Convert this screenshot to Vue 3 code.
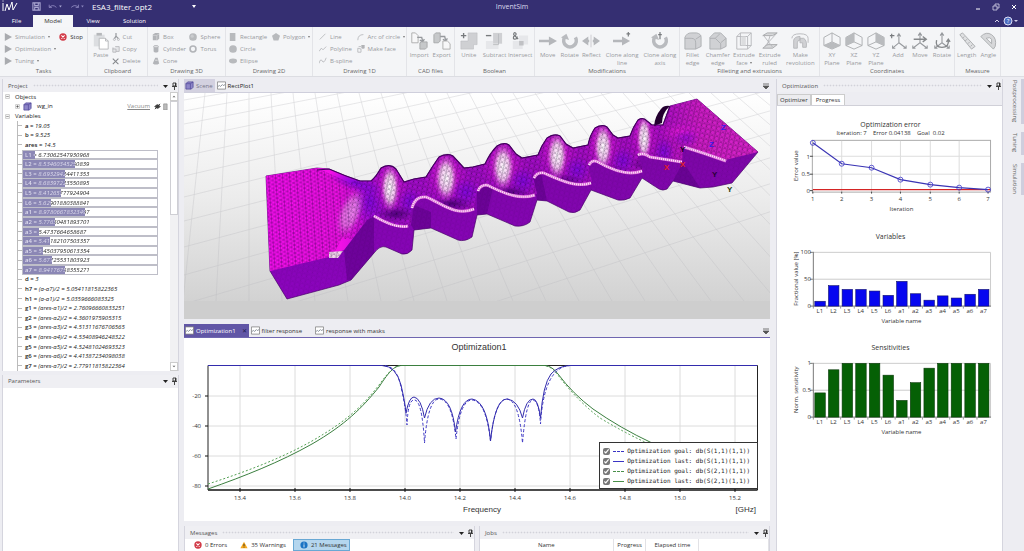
<template>
  <div class="app">
    <header class="titlebar">
      <div class="title-row">
        <svg class="logo" viewBox="0 0 16 13"><path d="M1 3v8M1 .5v1M3 11 5 4l2 6 3-8 1 8 4-7" fill="none" stroke="#fff" stroke-width="1" /></svg>
        <button class="quick" aria-label="Save"><svg viewBox="0 0 10 10"><path d="M1 1h8v8H1zM3 1v3h4V1M3 9V6h4v3" fill="none" stroke="#aaa6d2" stroke-width="1.2" /></svg></button>
        <button class="quick wide" aria-label="Undo"><svg viewBox="0 0 16 10"><path d="M1 3v3h3M1 6q4-4 8 0" fill="none" stroke="#8c86bd" /><path d="M12 4h3l-1.500 2z" fill="#aaa6d2" /></svg></button>
        <button class="quick wide" aria-label="Redo"><svg viewBox="0 0 16 10"><path d="M9 3v3H6M9 6Q5 2 1 6" fill="none" stroke="#8c86bd" /><path d="M12 4h3l-1.500 2z" fill="#8c86bd" /></svg></button>
        <span class="file-name">ESA3_filter_opt2</span>
        <svg class="name-arrow" viewBox="0 0 4 3"><path d="M0 0h4L2 3z" fill="#fff" /></svg>
        <span class="app-name">InventSim</span>
        <div class="window-buttons">
          <button aria-label="Minimize"><svg viewBox="0 0 8 8"><path d="M2 6h4" stroke="#fff" /></svg></button>
          <button aria-label="Restore"><svg viewBox="0 0 8 8"><path d="M1 3h4v4H1zM3 3V1h4v4H5" fill="none" stroke="#d6d3ea" stroke-width=".8" /></svg></button>
          <button aria-label="Close"><svg viewBox="0 0 8 8"><path d="m2 2 4 4M6 2 2 6" stroke="#fff" /></svg></button>
        </div>
      </div>
      <nav class="menu">
        <button v-for="m in menu" :key="m" :class="{ active: m === 'Model' }">{{ m }}</button>
        <svg class="help" viewBox="0 0 26 10"><path d="m3 6 2-2 2 2" fill="none" stroke="#d6d3ea" /><circle cx="16" cy="5" r="4" fill="#4c6cc0" stroke="#dcdcf4" /><text x="16" y="7" font-size="6" text-anchor="middle" fill="#fff">?</text><path d="M22 4h4l-2 2z" fill="#d6d3ea" /></svg>
      </nav>
    </header>

    <section class="ribbon">
      <div v-for="g in groups" :key="g.title" class="group">
        <div class="tools" :class="g.layout">
          <div v-for="(col, ci) in g.columns" :key="ci" class="tool-col">
            <button v-for="t in col" :key="t.label" :class="[t.big ? 'big' : 'small', { enabled: t.label === 'Stop' }]">
              <svg :viewBox="t.big ? '0 0 20 20' : '0 0 10 10'" v-html="icons[t.icon]"></svg>
              <span>{{ t.label }}<i v-if="t.menu" class="caret"></i></span>
            </button>
          </div>
        </div>
        <div class="group-title">{{ g.title }}</div>
      </div>
    </section>

    <main class="workspace">
      <div class="left">
        <section class="panel">
          <div class="panel-head"><span>Project</span><i class="grip"></i><svg viewBox="0 0 14 8" v-html="headIcons"></svg></div>
          <div class="tree-box">
            <ul class="tree">
              <li class="node"><svg viewBox="0 0 8 8" v-html="icons.minus"></svg><span>Objects</span></li>
              <li class="node object">
                <svg viewBox="0 0 8 8" v-html="icons.plus"></svg>
                <svg class="cube" viewBox="0 0 10 10" v-html="icons.cube"></svg>
                <span>wg_in</span><a href="#">Vacuum</a>
                <svg class="tag" viewBox="0 0 16 8"><path d="M1 4q3-4 6 0-3 4-6 0M1 7l6-6" fill="#444" stroke="#333" stroke-width="1" /><path d="M11 1h4v7h-4z" fill="#bbb" stroke="#888" stroke-width=".7" /></svg>
              </li>
              <li class="node"><svg viewBox="0 0 8 8" v-html="icons.minus"></svg><span>Variables</span></li>
              <li v-for="v in variables" :key="v.name" class="variable">
                <div v-if="v.pct" class="slider-row">
                  <div class="fill" :style="{ width: v.pct + '%' }"></div>
                  <div class="slider-text" :style="{ backgroundImage: `linear-gradient(to right, #e4e2f2 ${v.pct}%, #222 ${v.pct}%)` }"><b>{{ v.name }}</b> = <em>{{ v.value }}</em></div>
                </div>
                <div v-else class="plain"><b>{{ v.name }}</b> = <em>{{ v.value }}</em></div>
              </li>
            </ul>
            <div class="scrollbar">
              <button aria-label="Scroll up"><svg viewBox="0 0 8 8"><path d="M2 5h4L4 3z" fill="#666" /></svg></button>
              <div class="thumb"></div>
              <button aria-label="Scroll down"><svg viewBox="0 0 8 8"><path d="M2 3h4L4 5z" fill="#666" /></svg></button>
            </div>
          </div>
        </section>
        <section class="panel">
          <div class="panel-head plain-head"><span>Parameters</span><svg viewBox="0 0 14 8" v-html="headIcons"></svg></div>
          <div class="blank"></div>
        </section>
      </div>

      <div class="center">
        <section class="document scene-doc">
          <div class="doc-tabs">
            <button class="scene-tab"><svg viewBox="0 0 10 10" v-html="icons.cube"></svg>Scene</button>
            <button class="dark-tab"><svg viewBox="0 0 10 10" v-html="icons.plot"></svg>RectPlot1</button>
            <svg class="tabs-menu" viewBox="0 0 6 6"><path d="M0 1h6M0 3h6L3 6z" stroke="#555" stroke-width=".8" fill="#555" /></svg>
          </div>
          <svg class="scene" viewBox="184 94 586 226" preserveAspectRatio="xMidYMid slice">
            <defs>
              <linearGradient id="sky" x1="0" y1="0" x2="0" y2="1"><stop offset="0" stop-color="#fff" /><stop offset=".5" stop-color="#ececec" /><stop offset="1" stop-color="#d2d2d2" /></linearGradient>
              <linearGradient id="skin" x1="266" y1="0" x2="758" y2="0" gradientUnits="userSpaceOnUse">
                <stop offset="0" stop-color="#f90ef0" /><stop offset=".15" stop-color="#f210e6" /><stop offset=".23" stop-color="#a40ccc" /><stop offset=".5" stop-color="#a00cc4" /><stop offset=".8" stop-color="#a80cc4" /><stop offset=".88" stop-color="#cc1cc4" /><stop offset="1" stop-color="#d624c8" />
              </linearGradient>
              <linearGradient id="wall" x1="0" y1="150" x2="0" y2="300" gradientUnits="userSpaceOnUse"><stop offset="0" stop-color="#7c06a6" /><stop offset="1" stop-color="#8c04be" /></linearGradient>
              <radialGradient id="glow"><stop offset="0" stop-color="#fff" /><stop offset=".5" stop-color="#f8d4f4" stop-opacity=".9" /><stop offset="1" stop-color="#d62cd6" stop-opacity="0" /></radialGradient>
              <radialGradient id="pink"><stop offset="0" stop-color="#e81ad8" /><stop offset="1" stop-color="#c010d0" stop-opacity="0" /></radialGradient>
              <radialGradient id="violet"><stop offset="0" stop-color="#8206dc" /><stop offset="1" stop-color="#8206dc" stop-opacity="0" /></radialGradient>
              <radialGradient id="dim"><stop offset="0" stop-color="#50007c" /><stop offset="1" stop-color="#5a0090" stop-opacity="0" /></radialGradient>
              <pattern id="mesh" width="7" height="8" patternUnits="userSpaceOnUse" patternTransform="rotate(-4)"><path d="M0 0v8M3.500 0v8M0 0l7 4M0 4l7 4M0 8l7-4M0 4l7-4" stroke="#300048" stroke-width=".5" opacity=".6" fill="none" /></pattern>
              <pattern id="fine" width="5" height="5" patternUnits="userSpaceOnUse" patternTransform="rotate(12)"><path d="M0 0l5 5M5 0 0 5M0 0h5M2.500 0v5" stroke="#18002a" stroke-width=".4" opacity=".5" fill="none" /></pattern>
              <clipPath id="topClip"><path :d="topFace" /></clipPath>
            </defs>
            <rect x="184" y="94" width="586" height="208" fill="url(#sky)" />
            <g stroke="#b9b9bd" stroke-width=".6" opacity=".55">
              <line v-for="(l, i) in floor" :key="i" :x1="l[0]" :y1="l[1]" :x2="l[2]" :y2="l[3]" />
            </g>
            <rect x="184" y="302" width="586" height="18" fill="#cecece" />
            <path :d="outline" fill="url(#wall)" stroke="#48006a" stroke-width=".7" />
            <path d="M344 251 367 221 374 217 374 254 351 281 347 281zM411 226l3-20 17 7v16l-17 2zM477 193l8-8 8 4-6 26-10 1zM533 179l8-5 6 28-10-1zM673 182l10-19 17 26z" fill="#560080" opacity=".5" />
            <path :d="outline" fill="url(#fine)" opacity=".25" />
            <path :d="topFace" fill="url(#skin)" />
            <g clip-path="url(#topClip)">
              <ellipse cx="370" cy="203" rx="16" ry="26" fill="url(#violet)" />
              <g v-for="(p, i) in peaks" :key="i">
                <ellipse :cx="p[0]" :cy="p[1] - 4" :rx="p[2] * 2" ry="30" fill="url(#pink)" />
                <ellipse :cx="p[0] + 20" :cy="p[1] + 14" :rx="p[2] + 2" ry="14" fill="url(#violet)" />
                <ellipse :cx="p[0] + 6" :cy="p[1] + 26" rx="20" ry="8" fill="url(#dim)" />
                <ellipse :cx="p[0]" :cy="p[1]" :rx="p[2]" ry="25" fill="url(#glow)" />
              </g>
              <ellipse cx="350" cy="214" rx="13" ry="28" fill="url(#glow)" transform="rotate(22 350 214)" opacity=".5" />
              <ellipse cx="356" cy="184" rx="28" ry="9" fill="url(#violet)" transform="rotate(18 356 184)" />
              <ellipse cx="682" cy="133" rx="26" ry="11" fill="url(#pink)" />
              <ellipse cx="686" cy="139" rx="13" ry="10" fill="url(#violet)" opacity=".6" />
              <path d="M266 177 317 169 350 184 352 220 330 262 270 272z" fill="url(#mesh)" />
              <path d="M350 184 400 160 660 100 697 98 760 150 700 240H340l12-20z" fill="url(#fine)" />
            </g>
            <path d="M670 107q-6-1-9 3-6 7-7 17l8-3q0-10 8-17z" fill="#240030" />
            <path :d="skyline" fill="none" stroke="#45005f" stroke-width="1.200" />
            <path v-for="r in ridges" :key="r" :d="r" fill="none" stroke="#dc70d8" stroke-width="3" stroke-linejoin="round" />
            <path v-for="r in ridges" :key="r + 'w'" :d="r" fill="none" stroke="#fbeaf8" stroke-width="2" stroke-dasharray="1 1" stroke-linejoin="round" />
            <path d="m329 253 14-1-5 7-9 0z" fill="#f4d4ee" /><path d="m329 253 14-1-5 7-9 0z" fill="url(#fine)" />
            <g class="axis-marks"><text x="664" y="171" fill="#e0202a">X</text><text x="680" y="168" fill="#e0202a">X</text><text x="709" y="148" fill="#3a18e8">Z</text><text x="721" y="131" fill="#3a18e8">Z</text><text x="680" y="153" fill="#140018">Y</text><text x="712" y="178" fill="#2a0038">Y</text><text x="727" y="193" fill="#263c10">Y</text></g>
          </svg>
        </section>

        <section class="document plot-doc">
          <div class="doc-tabs purple">
            <button class="current"><svg viewBox="0 0 10 10" v-html="icons.plot"></svg>Optimization1<i>✕</i></button>
            <button><svg viewBox="0 0 10 10" v-html="icons.plot"></svg>filter response</button>
            <button><svg viewBox="0 0 10 10" v-html="icons.plot"></svg>response with masks</button>
            <svg class="tabs-menu" viewBox="0 0 6 6"><path d="M0 1h6M0 3h6L3 6z" stroke="#555" stroke-width=".8" fill="#555" /></svg>
          </div>
          <div class="plot">
            <svg viewBox="184 337 586 184">
              <text class="plot-title" x="479" y="349">Optimization1</text>
              <g stroke="#dcdcdc" stroke-width="1">
                <path v-for="x in freq" :key="x.label" :d="`M${x.x} 365V489`" />
                <path v-for="y in decibels" :key="y.label" :d="`M208 ${y.y}H757`" />
              </g>
              <path d="M208 489V364.500H757.500V489" fill="none" stroke="#222" stroke-width="1" />
              <path d="M208 489H757.500" stroke="#111" stroke-width="1.500" />
              <g stroke="#111">
                <path v-for="x in freq" :key="x.label" :d="`M${x.x} 487v4`" />
                <path v-for="y in decibels" :key="y.label" :d="`M205 ${y.y}h3`" />
              </g>
              <g fill="none" stroke-width="1">
                <path stroke="#54a054" stroke-dasharray="2 2" d="M208 483C245 471 280 458 312 440 345 421 362 406 379 384 390 369 395 364.500 402 364.500H545Q553 366 560 377 580 402 600 417 625 432 647 442" />
                <path stroke="#3b7f3f" d="M208 488C245 475 280 461 312 443 345 424 362 407 379 386 390 369 395 364.500 402 364.500H545Q552 365 558 373 573 393 593 408 620 427 652 442" />
                <path stroke="#3b35c4" stroke-dasharray="3 2" d="M385 364.500Q397 366 401 386 406 408 407 424 408 399 414 399 422 398 424.500 442 428 398 439 398 452 398 456 438 460 399 472 399 486 400 490.500 440 495 398 507 398 519 399 522.500 442 526 399 533 399 539 400 540.500 423 544 366 570 364.500" />
                <path stroke="#332cad" d="M208 364.500H382Q396 365 401 384 405 401 406 412 409 396 414 396 421 397 424.500 417 429 397 439 397 452 398 455.500 431 460 398 472 398 487 400 490.500 440 495 398 507 398 518 399 522.500 417 526 398 533 398 538 398 540.500 417 543 383 551 373 558 365 570 364.500H757" />
              </g>
              <g class="tick">
                <text v-for="x in freq" :key="x.label" :x="x.x" y="499" text-anchor="middle">{{ x.label }}</text>
                <text v-for="y in decibels" :key="y.label" x="201" :y="y.y + 2" text-anchor="end">{{ y.label }}</text>
              </g>
              <g class="axis-name"><text x="482" y="511" text-anchor="middle">Frequency</text><text x="756" y="511" text-anchor="end">[GHz]</text></g>
            </svg>
            <div class="legend">
              <label v-for="l in legend" :key="l.text"><input type="checkbox" checked /><i :class="[l.color, l.line]"></i>{{ l.text }}</label>
            </div>
          </div>
        </section>

        <div class="bottom">
          <section class="panel">
            <div class="panel-head"><span>Messages</span><i class="grip"></i><svg viewBox="0 0 14 8" v-html="headIcons"></svg></div>
            <div class="message-bar">
              <button><svg viewBox="0 0 10 10" v-html="icons.stop"></svg>0 Errors</button>
              <button><svg viewBox="0 0 10 10"><path d="m5 1 4.500 8h-9z" fill="#f6a81c" /><path d="M5 3.500v3M5 7.200v1" stroke="#222" /></svg>35 Warnings</button>
              <button class="pressed"><svg viewBox="0 0 10 10"><circle cx="5" cy="5" r="4.500" fill="#1a73c4" /><path d="M5 2v1.200M5 4.200V8" stroke="#fff" /></svg>21 Messages</button>
            </div>
          </section>
          <section class="panel">
            <div class="panel-head"><span>Jobs</span><i class="grip"></i><svg viewBox="0 0 14 8" v-html="headIcons"></svg></div>
            <table class="jobs"><thead><tr><th>Name</th><th>Progress</th><th>Elapsed time</th><th></th></tr></thead></table>
          </section>
        </div>
      </div>

      <section class="right panel">
        <div class="panel-head"><span>Optimization</span><i class="grip"></i><svg viewBox="0 0 14 8" v-html="headIcons"></svg></div>
        <div class="opt-body">
          <div class="opt-tabs"><button>Optimizer</button><button class="on">Progress</button></div>
          <div class="charts">
            <svg viewBox="776 106 226 112">
              <text class="chart-title" x="890" y="127">Optimization error</text>
              <text class="subtitle" x="890" y="135" text-anchor="middle">{{ summary }}</text>
              <rect x="811.500" y="140.500" width="179" height="52" fill="none" stroke="#aaa" />
              <g stroke="#ddd"><path v-for="p in errors.slice(1, 6)" :key="p.n" :d="`M${p.x} 141v51`" /><path d="M812 156.500h178M812 174.500h178" /></g>
              <path d="M809 156.500h3M809 174.500h3M809 191h3" stroke="#444" />
              <path v-for="p in errors" :key="p.n" :d="`M${p.x} 192v2`" stroke="#444" />
              <path d="M812 190h178" stroke="#d42424" stroke-width="1.500" />
              <polyline :points="errors.map(p => `${p.x},${p.y}`).join(' ')" fill="none" stroke="#3a34b4" stroke-width="1.200" />
              <circle v-for="p in errors" :key="p.n" :cx="p.x" :cy="p.y" r="2.500" fill="none" stroke="#3a34c8" stroke-width=".8" />
              <g text-anchor="end"><text x="809" y="159">1</text><text x="809" y="176">0.5</text><text x="809" y="193">0</text></g>
              <text v-for="p in errors" :key="p.n" :x="p.x" y="201" text-anchor="middle">{{ p.n }}</text>
              <text x="901" y="211" text-anchor="middle">Iteration</text>
              <text transform="translate(797 166) rotate(-90)" text-anchor="middle">Error value</text>
            </svg>
            <svg v-for="c in barCharts" :key="c.title" viewBox="776 218 226 112">
              <text class="chart-title" x="890" y="239">{{ c.title }}</text>
              <path d="M812 252.500h178.500v54.500M812 279.500h178" stroke="#ccc" fill="none" />
              <path d="M812.500 252v55M809 252.500h3M809 279.500h3M809 306.500h182" stroke="#777" fill="none" />
              <g v-for="(b, i) in c.values" :key="i">
                <rect :x="814 + i * 13.700" :y="306.500 - b * c.scale" width="10.500" :height="b * c.scale" :fill="c.color" :stroke="c.edge" stroke-width=".6" />
                <path :d="`M${812.500 + i * 13.700} 307v2`" stroke="#555" stroke-width=".6" />
                <text :x="819 + i * 13.700" y="313" text-anchor="middle">{{ names[i] }}</text>
              </g>
              <g text-anchor="end"><text v-for="(t, i) in c.ticks" :key="t" x="810" :y="254.500 + i * 27">{{ t }}</text></g>
              <text x="901" y="323" text-anchor="middle">Variable name</text>
              <text transform="translate(797 279) rotate(-90)" text-anchor="middle">{{ c.axis }}</text>
            </svg>
          </div>
        </div>
      </section>

      <aside class="side-tabs">
        <button>Postprocessing</button><button>Tuning</button><button>Simulation</button>
      </aside>
    </main>
  </div>
</template>

<script setup>
const menu = ['File', 'Model', 'View', 'Solution']

const G = '#b2b4b8'
const icons = {
  play: `<path d="M1 0v10l9-5z" fill="#a9abaf"/>`,
  stop: '<circle cx="5" cy="5" r="4.600" fill="#d23b48"/><path d="m3 3 4 4M7 3 3 7" stroke="#fff" stroke-width="1.300"/>',
  paste: '<path d="M2 3h12v13H2z" fill="#dcdee1"/><path d="M5 1h6v3H5z" fill="#b5b7ba"/><path d="M8 7h7l3 3v9H8z" fill="#fff" stroke="#b5b7ba"/><path d="M15 7v3h3" fill="none" stroke="#b5b7ba"/>',
  cut: `<path d="M5 0v4L3 7M5 4l3 3" fill="none" stroke="#96999d" stroke-width="1.500"/><circle cx="3" cy="8" r="1.300" fill="none" stroke="${G}"/><circle cx="8" cy="8" r="1.300" fill="none" stroke="${G}"/>`,
  copy: `<path d="M1 5h4v4H1zM4 2h5v6H5" fill="#e4e5e8" stroke="${G}"/><path d="M0 4h3" stroke="${G}"/>`,
  del: '<path d="m1 2 7 7M8 2 1 9" stroke="#84878b" stroke-width="1.300"/>',
  box: `<path d="M1 2 4 0h5v7L7 9H1z" fill="${G}"/><path d="M1 3h5v6M6 3l3-2" fill="none" stroke="#e0e0e3" stroke-width=".7"/>`,
  cylinder: `<path d="M2 2v6q3 3 6 0V2" fill="${G}"/><ellipse cx="5" cy="2" rx="3" ry="1.500" fill="#dcdde0" stroke="${G}"/>`,
  cone: `<path d="M4 1h3l2 7q-4 3-8 0z" fill="${G}"/><path d="M4 4h3" stroke="#eee"/>`,
  ball: '<circle cx="5" cy="5" r="4.800" fill="#b8babd"/><circle cx="4" cy="4" r="2" fill="#cacccf"/>',
  torus: `<circle cx="5" cy="5" r="3.700" fill="none" stroke="${G}" stroke-width="2"/>`,
  rect: '<path d="M1 0h7v10H1z" fill="#b8babd"/>',
  circle: '<circle cx="5" cy="5" r="4.800" fill="#b8babd"/>',
  ellipse: '<ellipse cx="5" cy="5" rx="5" ry="3" fill="#b8babd"/>',
  polygon: '<path d="M5 0l5 3.500-2 6H2l-2-6z" fill="#b8babd"/>',
  line: `<path d="m1 8 7-7" stroke="${G}"/>`,
  poly: `<path d="m0 8 3-4 2 2 4-4" fill="none" stroke="${G}"/>`,
  spline: `<path d="M0 8q2-7 4-3t5-4" fill="none" stroke="${G}"/>`,
  arc: `<path d="M1 9q0-7 7-7" fill="none" stroke="${G}"/>`,
  face: `<path d="M1 4v5h4V5z" fill="none" stroke="${G}"/><path d="M6 0h3v4H6zM2 2h3" fill="${G}" stroke="${G}"/>`,
  importCad: '<path d="M2 1h4l3 3v8H2z" fill="#f7f7f8" stroke="#aaa"/><path d="M8 6h5l1 4m-3-1 3 2 2-3" fill="none" stroke="#96999d" stroke-width="1.500"/><path d="m11 12 2-1h6v6l-2 2h-6z" fill="#c6c8ca" stroke="#a5a7a9"/>',
  exportCad: '<path d="m1 3 2-2h5v9l-2 2H1z" fill="#c6c8ca" stroke="#a5a7a9"/><path d="M8 5h5l1 4m-3-1 3 2 2-3" fill="none" stroke="#96999d" stroke-width="1.500"/><path d="M11 10h5l3 3v6h-8z" fill="#f7f7f8" stroke="#aaa"/>',
  unite: '<path d="M9 1h10v13h-4v5H1v-9h8z" fill="#cfd0d3" stroke="#b9bbbe" stroke-width=".6"/><path d="M4 1v6M1 4h6" stroke="#777a7d" stroke-width="1.500"/>',
  subtract: '<path d="M1 10h8v4h6v5H1z" fill="#e6e7ea"/><path d="M9 1h10v12H9z" fill="#cfd0d3"/><path d="M15 2v12H9" fill="none" stroke="#b9bbbe"/><path d="M1 4h6" stroke="#777a7d" stroke-width="1.500"/>',
  intersect: '<path d="M9 4h10v10H9zM2 10h11v9H2z" fill="#e6e7ea"/><path d="M9 10h5v5H9z" fill="#c0c1c4"/><path d="M8 8 3 3q0-3 2-2 2 2-2 4-1 3 1 3 3 0 3-3" fill="none" stroke="#777a7d" stroke-width="1.300"/>',
  move: '<path d="M0 8.500h11V5l9 5-9 5v-3.500H0z" fill="#b5b7bb"/>',
  rotate: '<path d="M4 6a7 7 0 1 0 12 0" fill="none" stroke="#b9bbbf" stroke-width="4"/><path d="M0 6 6 2l3 7z" fill="#b9bbbf"/>',
  reflect: '<path d="m0 10 7-5v10zM20 10l-7-5v10z" fill="#b5b7bb"/><path d="M10 3v14" stroke="#c9cacd"/><path d="M5 10h3M12 10h3" stroke="#b5b7bb" stroke-width="3"/>',
  cloneLine: '<path d="M0 8.500h10V5l9 5-9 5v-3.500H0z" fill="#b5b7bb"/><path d="M17 0v5M15 2h4" stroke="#777a7d" stroke-width="1.300"/>',
  cloneAxis: '<path d="M4 6a7 7 0 1 0 12 0" fill="none" stroke="#b9bbbf" stroke-width="4"/><path d="M0 6 6 2l3 7z" fill="#b9bbbf"/><path d="M10 0v8M8 3h4" stroke="#777a7d" stroke-width="1.300"/>',
  fillet: '<path d="M1 6Q3 1 8 1h6q5 1 5 5v10l-6 3H1z" fill="#d0d1d4" stroke="#acaeb1"/><path d="M1 7h7q5 0 5 5v7M13 8l6-4" fill="none" stroke="#acaeb1"/>',
  chamfer: '<path d="m1 6 5-5h7l6 6v9l-6 3H1z" fill="#d0d1d4" stroke="#acaeb1"/><path d="M1 7h6l6 6v6M13 12l6-5M7 7l5-5" fill="none" stroke="#acaeb1"/>',
  extrude: '<path d="M2 5h12v14H2zM6 1h12v14M2 5l4-4M14 5l4-4M14 19l4-4M6 1v14h12" fill="none" stroke="#b5b7ba"/><path d="M7 5h5v10H7z" fill="#dcdddf"/>',
  ruled: '<path d="M2 4 7 1h11l-5 3zM2 18l5-4h11l-5 4z" fill="#d7d8da" stroke="#a5a7a9"/><path d="M3 4l10 13M17 2 4 16M10 4l-3 11" stroke="#b5b7ba"/>',
  revolve: '<path d="M1 7q0-5 9-5t9 5v5" fill="none" stroke="#b5b7ba"/><path d="M3 9q1-4 7-4v4q-3 0-3 3v6H3zM10 7h4q4 2 3 10h-4v-5h-3z" fill="#d0d1d4" stroke="#b5b7ba"/>',
  xy: '<path d="m10 1 9 5v9l-9 4-9-4V6zM10 1v10M1 15l9-4 9 4" fill="none" stroke="#a9abae"/><path d="m10 11 9 4-9 4-9-4z" fill="#b9bbbe"/>',
  xz: '<path d="m10 1 9 5v9l-9 4-9-4V6zM10 1v10M1 15l9-4 9 4" fill="none" stroke="#a9abae"/><path d="m10 1-9 5v9l9-4z" fill="#b9bbbe"/>',
  yz: '<path d="m10 1 9 5v9l-9 4-9-4V6zM10 1v10M1 15l9-4 9 4" fill="none" stroke="#a9abae"/><path d="m10 1 9 5v9l-9-4z" fill="#b9bbbe"/>',
  addAxis: '<path d="M11 3v9l-7 6M11 12l8 6M9 5l2-3 2 3M4 15v3h3M16 18h3v-3" fill="none" stroke="#96999d" stroke-width="1.200"/><path d="M3 2v5M1 4h5" stroke="#777a7d" stroke-width="1.300"/>',
  moveAxis: '<path d="M10 2v10l-8 6M10 12l8 6M8 4l2-3 2 3M2 15v3h3M15 18h3v-3" fill="none" stroke="#96999d" stroke-width="1.200"/><path d="M3 8h13m-3-3 4 3-4 3" fill="none" stroke="#85888b" stroke-width="1.500"/>',
  rotateAxis: '<path d="M10 2v10l-8 6M10 12l8 6M8 4l2-3 2 3M2 15v3h3M15 18h3v-3" fill="none" stroke="#96999d" stroke-width="1.200"/><path d="M4 9q-2 8 6 8t7-8M15 11l2-3 2 3" fill="none" stroke="#85888b" stroke-width="1.500"/>',
  ruler: '<path d="m2 3 3-2 14 15-4 3z" fill="#dfe0e2" stroke="#a9abae"/><path d="m5 7 2-2M8 10l2-2M11 13l2-2M14 16l2-2" stroke="#a9abae"/>',
  angle: '<path d="M2 5Q8-1 14 3t4 13l-2 3z" fill="#d7d8da" stroke="#a9abae"/><path d="m8 7 6 6V8q-2-3-6-1" fill="#f4f5f7" stroke="#a9abae"/>',
  minus: '<path d="M1 1h6v6H1z" fill="#fff" stroke="#999" stroke-width=".8"/><path d="M2 4h4" stroke="#444" stroke-width=".8"/>',
  plus: '<path d="M1 1h6v6H1z" fill="#fff" stroke="#999" stroke-width=".8"/><path d="M2 4h4M4 2v4" stroke="#333" stroke-width=".9"/>',
  cube: '<path d="m1 3 2-2h6v6L7 9H1z" fill="#8e86c8" stroke="#4b4194" stroke-width=".8"/><path d="M1 3h5v6M6 3l3-2" fill="none" stroke="#4b4194" stroke-width=".7"/>',
  plot: '<path d="M.5 1h9v8h-9z" fill="#fff" stroke="#777" stroke-width=".8"/><path d="m1 6 2-1 1 1 2-2 1 1 2-1" fill="none" stroke="#66707a" stroke-width=".8"/>'
}
const headIcons = '<path d="M0 3h5L2.500 6z" fill="#222"/><path d="M10 1h3v3h-3zM9 4.500h5M11.500 5v3" fill="none" stroke="#333" stroke-width=".9"/><path d="M12 1h1v3h-1z" fill="#333"/>'

const s = (label, icon, hasMenu = false) => ({ label, icon, menu: hasMenu })
const b = (label, icon, hasMenu = false) => ({ label, icon, menu: hasMenu, big: true })
const groups = [
  { title: 'Tasks', layout: 'tasks', columns: [[s('Simulation', 'play', true), s('Optimization', 'play', true), s('Tuning', 'play', true)], [s('Stop', 'stop')]] },
  { title: 'Clipboard', layout: 'clip', columns: [[b('Paste', 'paste')], [s('Cut', 'cut'), s('Copy', 'copy'), s('Delete', 'del')]] },
  { title: 'Drawing 3D', layout: 'draw', columns: [[s('Box', 'box'), s('Cylinder', 'cylinder'), s('Cone', 'cone')], [s('Sphere', 'ball'), s('Torus', 'torus')]] },
  { title: 'Drawing 2D', layout: 'flat', columns: [[s('Rectangle', 'rect'), s('Circle', 'circle'), s('Ellipse', 'ellipse')], [s('Polygon', 'polygon', true)]] },
  { title: 'Drawing 1D', layout: 'lines', columns: [[s('Line', 'line'), s('Polyline', 'poly'), s('B-spline', 'spline')], [s('Arc of circle', 'arc', true), s('Make face', 'face')]] },
  { title: 'CAD files', layout: 'even', columns: [[b('Import', 'importCad')], [b('Export', 'exportCad')]] },
  { title: 'Boolean', layout: 'even', columns: [[b('Unite', 'unite')], [b('Subtract', 'subtract')], [b('Intersect', 'intersect')]] },
  { title: 'Modifications', layout: 'mods', columns: [[b('Move', 'move')], [b('Rotate', 'rotate')], [b('Reflect', 'reflect')], [b('Clone along line', 'cloneLine')], [b('Clone along axis', 'cloneAxis')]] },
  { title: 'Filleting and extrusions', layout: 'fillets', columns: [[b('Fillet edge', 'fillet')], [b('Chamfer edge', 'chamfer')], [b('Extrude face', 'extrude', true)], [b('Extrude ruled', 'ruled')], [b('Make revolution', 'revolve')]] },
  { title: 'Coordinates', layout: 'even', columns: [[b('XY Plane', 'xy')], [b('XZ Plane', 'xz')], [b('YZ Plane', 'yz')], [b('Add', 'addAxis')], [b('Move', 'moveAxis')], [b('Rotate', 'rotateAxis')]] },
  { title: 'Measure', layout: 'even', columns: [[b('Length', 'ruler')], [b('Angle', 'angle')]] }
]

const variables = [
  ['a', '19.05'], ['b', '9.525'], ['ares', '14.5'],
  ['L1', '6.73062547930968', 9], ['L2', '8.53460345250839', 39], ['L3', '8.69329424411353', 31],
  ['L4', '8.68397223550895', 31], ['L5', '8.41265777924904', 28], ['L6', '5.62901880388841', 21],
  ['a1', '8.97806678323497', 46], ['a2', '5.77650481893701', 24], ['a3', '5.4737664658687', 12],
  ['a4', '5.41182107503357', 20], ['a5', '5.45037950613354', 15], ['a6', '5.67725531803923', 22],
  ['a7', '8.94176758355271', 31], ['d', '3'],
  ['h7', '(a-a7)/2 = 5.05411815822365'], ['h1', '(a-a1)/2 = 5.0359666083325'],
  ['g1', '(ares-a1)/2 = 2.76096660833251'], ['g2', '(ares-a2)/2 = 4.3601975905315'],
  ['g3', '(ares-a3)/2 = 4.51311676706565'], ['g4', '(ares-a4)/2 = 4.53408946248322'],
  ['g5', '(ares-a5)/2 = 4.52481024693323'], ['g6', '(ares-a6)/2 = 4.41387234098038'],
  ['g7', '(ares-a7)/2 = 2.77911815822364']
].map(([name, value, pct]) => ({ name, value, pct }))

// floor grid of the 3D view, drawn in perspective
const floor = []
for (let i = -1; i < 27; i++) floor.push([205 + 22 * i, 94, 205 + 22 * i + 11 * (i - 2), 302])
const rows = [92, 101, 112, 125, 140, 157, 177, 198, 222, 248, 276, 305, 337, 370, 405]
rows.forEach((y, i) => floor.push([184, y, 770, y - 586 * (0.16 + i * 0.012)]))

const crest = 'L329 170 Q345 177 360 182 L371 182 Q376 178 381 169 Q390 164 396 170 L404 183 414 180 426 178 Q432 168 439 158 Q447 154 453 157 L464 169 473 168 485 165 Q490 154 497 147 Q504 143 509 146 L516 155 522 159 538 156 Q541 147 547 139 Q554 134 560 137 L566 145 573 149 588 146 Q590 136 595 129 Q602 125 607 128 L613 136 618 139 630 137 Q633 128 638 121 Q643 118 647 122 L652 126 663 126 670 107'
const skyline = `M317 171${crest}`
const outline = `M266 177 317 169${crest} 697 100 758 153 L732 184 713 188 700 189 673 182 667 190 Q663 192 659 190 L642 179 630 199 Q624 202 618 201 L591 191 580 211 Q575 215 569 213 L547 202 537 201 530 223 Q524 228 515 227 L487 215 477 216 472 238 Q465 243 458 241 L431 229 414 231 412 251 Q408 256 402 255 L386 248 Q380 246 374 254 L351 281 339 286 287 300 270 272Z`
const topFace = `M266 177 317 169${crest} 697 100 758 153 L725 161 693 150 683 148 682 163 Q655 160 643 155 L637 154 643 171 Q633 177 613 170 L595 161 588 165 592 183 Q580 189 560 180 L542 173 533 178 537 195 Q524 203 500 193 L485 185 477 193 475 210 Q464 217 444 206 Q430 197 424 197 Q414 198 412 206 L411 225 Q404 233 391 225 L374 217 367 221 344 251 329 258 270 272Z`
const ridges = [
  'M374 217 Q396 230 408 227 M412 209 Q415 197 426 198 C440 203 455 218 474 210',
  'M478 192 Q480 186 487 186 C505 195 520 201 535 196 M534 179 Q537 173 544 174 C560 181 576 189 591 184',
  'M589 166 Q592 160 598 163 C612 171 629 177 642 172 M638 156 Q643 153 650 158 L682 163 M684 148 Q704 154 726 162'
]
const peaks = [[390, 189, 10], [446, 179, 12], [503, 168, 12], [557, 157, 11], [603, 148, 10], [644, 139, 8]]

const freq = Array.from({ length: 10 }, (_, i) => ({ label: (13.4 + i * 0.2).toFixed(1), x: 240 + i * 55 }))
const decibels = [-20, -40, -60, -80].map((label, i) => ({ label, y: 395 + i * 30 }))
const legend = [
  { text: 'Optimization goal: db(S(1,1)(1,1))', color: 'blue', line: 'dashed' },
  { text: 'Optimization last: db(S(1,1)(1,1))', color: 'blue', line: 'solid' },
  { text: 'Optimization goal: db(S(2,1)(1,1))', color: 'green', line: 'dashed' },
  { text: 'Optimization last: db(S(2,1)(1,1))', color: 'green', line: 'solid' }
]

const summary = 'Iteration: 7    Error 0.04138    Goal  0.02'
const errors = [143, 164, 168, 180, 185, 188, 190].map((y, i) => ({ n: i + 1, x: 812 + Math.round(i * 29.4), y }))
const names = ['L1', 'L2', 'L3', 'L4', 'L5', 'L6', 'a1', 'a2', 'a3', 'a4', 'a5', 'a6', 'a7']
const barCharts = [
  { title: 'Variables', axis: 'Fractional value [%]', ticks: ['100', '50', '0'], scale: 0.54, color: '#0606f0', edge: '#10106a', values: [9, 38, 31, 31, 28, 20, 46, 23, 11, 19, 15, 22, 31] },
  { title: 'Sensitivities', axis: 'Norm. sensitivity', ticks: ['1', '0.5', '0'], scale: 54, color: '#056005', edge: '#0a380a', values: [0.45, 0.88, 1, 1, 1, 0.78, 0.31, 0.64, 0.91, 1, 1, 1, 1] }
]
</script>

<style>
body {
  margin: 0;
  overflow: hidden;
}
</style>

<style scoped>
.app {
  height: 100vh;
  display: flex;
  flex-direction: column;
  background: #ededf2;
  color: #333;
  font: 6px/8px "Open Sans", "Noto Sans", sans-serif;
  overflow: hidden;
}

button {
  font: inherit;
  color: inherit;
  background: none;
  border: 0;
  padding: 0;
}

svg {
  display: block;
}

.titlebar {
  background: #352f72;
  color: #fff;
}

.title-row {
  display: flex;
  align-items: center;
  height: 13px;
  position: relative;
}

.logo {
  width: 16px;
  height: 13px;
  margin-left: 2px;
}

.quick svg {
  width: 9px;
  height: 9px;
}

.quick {
  margin-left: 14px;
}

.quick.wide {
  margin-left: 7px;
}

.quick.wide svg {
  width: 15px;
}

.file-name {
  font-size: 8px;
  line-height: 12px;
  margin-left: 7px;
}

.name-arrow {
  width: 4px;
  height: 3px;
  margin-left: 40px;
}

.app-name {
  position: absolute;
  left: 50%;
  transform: translateX(-50%);
  font-size: 7px;
  color: #dddbee;
}

.window-buttons {
  margin-left: auto;
  display: flex;
  gap: 10px;
  padding-right: 6px;
}

.window-buttons svg {
  width: 8px;
  height: 8px;
}

.menu {
  display: flex;
  height: 14px;
  align-items: flex-end;
}

.menu button {
  height: 12px;
  width: 40px;
}

.menu button:first-child {
  width: 33px;
}

.menu button:last-of-type {
  width: 43px;
}

.menu .active {
  background: #f5f6f8;
  color: #333;
}

.help {
  width: 26px;
  height: 10px;
  margin: 0 6px 1px auto;
}

.ribbon {
  display: grid;
  grid-template-columns: 88fr 60fr 78fr 87fr 94fr 48fr 80fr 145fr 140fr 135fr 46fr 23fr;
  background: #f4f5f7;
  border-bottom: 1px solid #dcdde2;
  color: #989a9e;
}

.group {
  border-right: 1px solid #e3e4e8;
  padding-top: 4px;
  min-width: 0;
}

.tools {
  display: grid;
  height: 35px;
}

.tasks { grid-template-columns: 56fr 28fr; padding-left: 4px; }
.clip { grid-template-columns: 22fr 36fr; padding-left: 2px; }
.draw { grid-template-columns: 38fr 36fr; padding-left: 4px; }
.flat { grid-template-columns: 43fr 40fr; padding-left: 3px; }
.lines { grid-template-columns: 38fr 50fr; padding-left: 6px; }
.even { grid-auto-flow: column; grid-auto-columns: 1fr; padding: 0 1px; }
.mods { grid-template-columns: 23fr 21fr 22fr 39fr 36fr; padding: 0 1px; }
.fillets { grid-template-columns: 23fr 27fr 25fr 26fr 35fr; padding: 0 1px; }

.small {
  display: flex;
  align-items: center;
  gap: 3px;
  height: 12px;
  white-space: nowrap;
}

.small svg {
  width: 8px;
  height: 8px;
  flex: none;
}

.enabled {
  color: #333;
}

.caret {
  display: inline-block;
  vertical-align: middle;
  margin-left: 3px;
  border: 1px solid transparent;
  border-top: 2px solid #777;
}

.big {
  display: flex;
  flex-direction: column;
  align-items: center;
  gap: 1px;
  width: 100%;
  padding-top: 1px;
}

.big svg {
  width: 18px;
  height: 18px;
}

.big .caret {
  margin-left: 2px;
}

.group-title {
  text-align: center;
  color: #666;
  height: 10px;
  line-height: 10px;
}

.workspace {
  flex: 1;
  min-height: 0;
  display: grid;
  grid-template-columns: 177fr 586fr 228fr 16fr;
  column-gap: 5px;
  padding: 2px 0 0 2px;
}

.left {
  display: grid;
  grid-template-rows: 291fr 176fr;
  gap: 4px;
  min-height: 0;
}

.panel {
  display: flex;
  flex-direction: column;
  min-height: 0;
  min-width: 0;
  border: 1px solid #d5d5de;
  border-width: 0 1px;
}

.panel-head {
  display: flex;
  align-items: center;
  gap: 5px;
  height: 13px;
  flex: none;
  padding: 0 1px 0 5px;
  color: #555;
  background: #efeff3;
}

.panel-head svg {
  width: 14px;
  height: 8px;
}

.plain-head {
  justify-content: space-between;
}

.grip {
  flex: 1;
  height: 3px;
  background: radial-gradient(circle, #d2d2da 40%, transparent 50%) 0 0 / 3px 3px;
}

.tree-box {
  flex: 1;
  display: flex;
  background: #fff;
  min-height: 0;
}

.tree {
  flex: 1;
  display: flex;
  flex-direction: column;
  list-style: none;
  margin: 0;
  padding: 0;
  color: #222;
}

.tree li {
  flex: 1;
  min-height: 0;
  display: flex;
  align-items: center;
}

.node {
  gap: 5px;
  padding-left: 2px;
}

.node svg {
  width: 5px;
  height: 5px;
}

.object {
  padding-left: 12px;
}

.object a {
  margin-left: auto;
  color: #888;
}

.node .cube {
  width: 9px;
  height: 9px;
  margin-left: -2px;
}

.node .tag {
  width: 16px;
  height: 7px;
  margin: 0 1px 0 -2px;
}

.variable {
  margin-left: 14px;
  border-left: 1px solid #bbb;
}

.variable::before {
  content: "";
  width: 4px;
  height: 1px;
  background: #bbb;
}

.variable b {
  font-weight: 600;
}

.plain {
  padding-left: 3px;
  white-space: nowrap;
}

.slider-row {
  width: 136px;
  height: 100%;
  box-sizing: border-box;
  border: 1px solid #bebec8;
  display: grid;
}

.fill,
.slider-text {
  grid-area: 1 / 1;
}

.fill {
  background: #8b87b5;
}

.slider-text {
  padding-left: 2px;
  background-clip: text;
  color: transparent;
  line-height: 8px;
}

.scrollbar {
  width: 8px;
  display: flex;
  flex-direction: column;
  background: #f1f1f3;
}

.scrollbar button {
  height: 9px;
  border: 1px solid #ccc;
  background: #fff;
}

.scrollbar button svg {
  width: 6px;
  height: 7px;
}

.scrollbar button:last-child {
  margin-top: auto;
}

.thumb {
  height: 41%;
  background: #fff;
  border: 1px solid #cfcfd4;
  box-sizing: border-box;
}

.blank {
  flex: 1;
  background: #fff;
}

.center {
  display: grid;
  grid-template-rows: 240fr 197fr 25fr;
  row-gap: 5px;
  min-width: 0;
  min-height: 0;
}

.document {
  display: flex;
  flex-direction: column;
  min-height: 0;
}

.doc-tabs {
  display: flex;
  align-items: center;
  height: 13px;
  flex: none;
  border-bottom: 1px solid #cfcfdc;
}

.doc-tabs button {
  display: flex;
  align-items: center;
  gap: 2px;
  height: 100%;
  padding: 0 12px 0 1px;
}

.doc-tabs button svg {
  width: 9px;
  height: 9px;
}

.doc-tabs .scene-tab {
  background: #d3d1e0;
  color: #77758a;
  padding-right: 2px;
  margin-right: 1px;
}

.doc-tabs .dark-tab {
  color: #222;
}

.tabs-menu {
  width: 6px;
  height: 6px;
  margin: 0 1px 0 auto;
}

.purple {
  border-bottom: 1px solid #6f66b0;
}

.doc-tabs .current {
  background: #6156a6;
  color: #fff;
  padding-right: 2px;
  margin-right: 1px;
}

.current i {
  font-style: normal;
  margin-left: 4px;
  color: #1f1a50;
}

.scene {
  width: 100%;
  flex: 1;
  min-height: 0;
}

.axis-marks {
  font: bold 8px "Liberation Sans", sans-serif;
}

.plot {
  flex: 1;
  min-height: 0;
  background: #fff;
  position: relative;
}

.plot svg {
  width: 100%;
}

.plot-title {
  font: 9px "Liberation Sans", sans-serif;
  text-anchor: middle;
  fill: #333;
}

.axis-name {
  font: 8px "Liberation Sans", sans-serif;
  fill: #333;
}

.tick {
  fill: #333;
}

.legend {
  position: absolute;
  right: 12px;
  bottom: 32px;
  background: #fff;
  border: 1px solid #333;
  padding: 3px 7px 2px 2px;
  font: 6px/10px "DejaVu Sans Mono", monospace;
}

.legend label {
  display: flex;
  align-items: center;
  height: 10px;
  white-space: nowrap;
  color: #222;
}

.legend input {
  width: 7px;
  height: 7px;
  margin: 0 3px 0 1px;
  accent-color: #777;
}

.legend i {
  width: 11px;
  margin-right: 3px;
  border-top: 1px solid #3b35c4;
}

.legend .green {
  border-color: #4a904a;
}

.legend .dashed {
  border-top-style: dashed;
}

.bottom {
  display: grid;
  grid-template-columns: 291fr 291fr;
  column-gap: 4px;
  min-height: 0;
}

.message-bar {
  display: flex;
  gap: 5px;
  padding: 0 8px;
  background: #fff;
  flex: 1;
}

.message-bar button {
  display: flex;
  align-items: center;
  gap: 3px;
  padding: 0 2px 0 1px;
  height: 12px;
}

.message-bar button + button {
  padding-left: 6px;
}

.message-bar svg {
  width: 8px;
  height: 8px;
}

.message-bar .pressed {
  background: #b4d6ee;
  border: 1px solid #69a8d4;
  box-sizing: border-box;
}

.jobs {
  width: 100%;
  table-layout: fixed;
  border-collapse: collapse;
  background: #fff;
}

.jobs th {
  font-weight: 400;
  height: 12px;
  padding: 0;
  border-right: 1px solid #e2e2e6;
}

.jobs th:nth-child(1) { width: 46%; }
.jobs th:nth-child(2) { width: 11%; }
.jobs th:nth-child(3) { width: 18%; }

.right {
  margin-left: 1px;
}

.opt-body {
  flex: 1;
  min-height: 0;
  display: flex;
  flex-direction: column;
  padding-top: 2px;
}

.opt-tabs {
  display: flex;
  height: 11px;
}

.opt-tabs button {
  padding: 0 2px;
  border: 1px solid #ccc;
  border-bottom: 0;
  background: #ececef;
}

.opt-tabs .on {
  background: #fff;
  padding: 0 4px;
}

.charts {
  flex: 1;
  background: #fff;
  border-top: 1px solid #d0d0d8;
}

.charts text {
  fill: #333;
}

.charts .chart-title {
  font-size: 7px;
  text-anchor: middle;
}

.subtitle {
  white-space: pre;
}

.side-tabs {
  display: flex;
  flex-direction: column;
  align-items: flex-end;
  gap: 8px;
  color: #666;
}

.side-tabs button {
  writing-mode: vertical-rl;
  border-right: 3px solid #cfcedd;
  padding: 1px 2px 2px 0;
}
</style>
